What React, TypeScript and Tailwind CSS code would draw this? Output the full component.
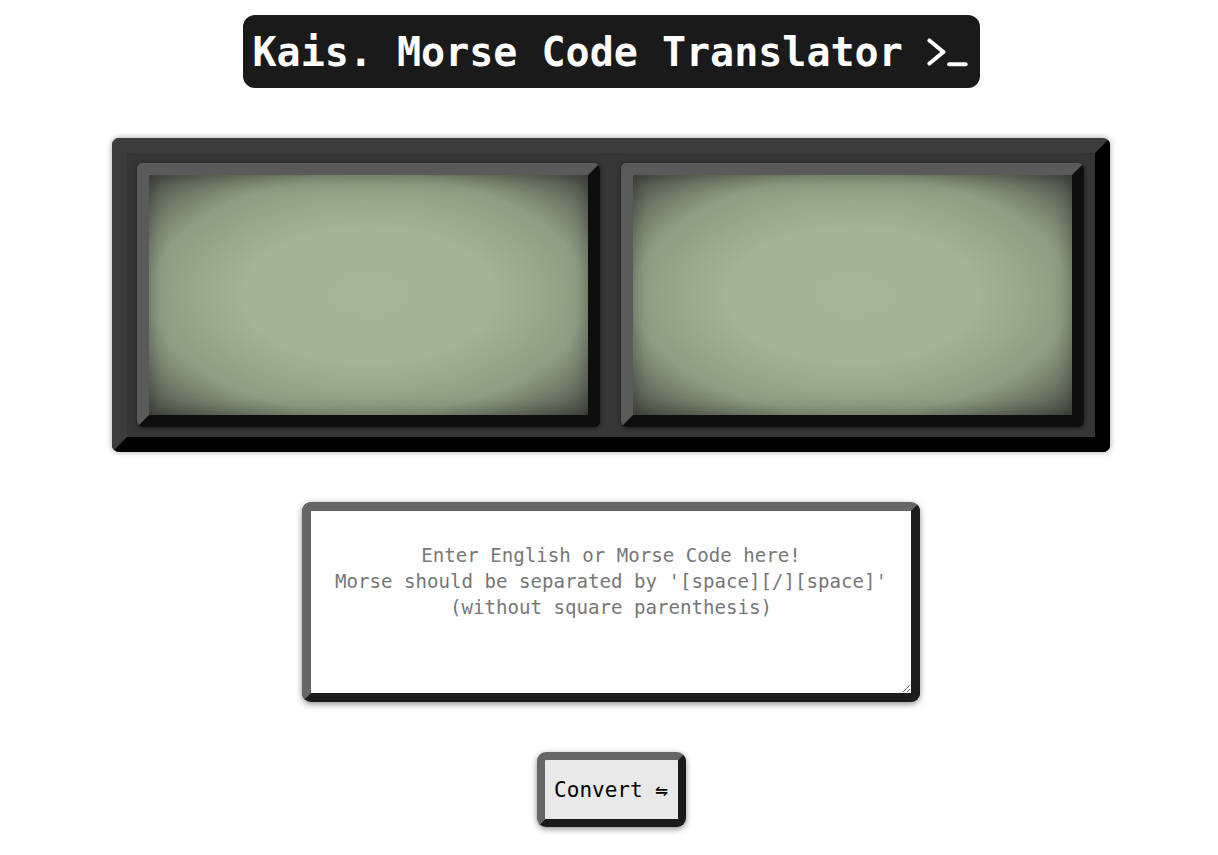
import React from "react";

const mono = { fontFamily: '"DejaVu Sans Mono", "Liberation Mono", monospace' };

function TerminalIcon() {
  return (
    <svg width="52" height="40" viewBox="0 0 52 40" fill="none" stroke="white" strokeWidth="5" strokeLinecap="round" strokeLinejoin="round">
      <polyline points="3,6 20,20 3,34" />
      <line x1="27" y1="35" x2="47" y2="35" />
    </svg>
  );
}

function Screen() {
  return (
    <div className="w-[463px] h-[264px] rounded-[6px] border-[12px] border-t-[#5a5a5a] border-l-[#5a5a5a] border-r-[#0e0e0e] border-b-[#0e0e0e] shadow-[0_1px_4px_rgba(0,0,0,0.5)]">
      <div className="w-full h-full bg-[radial-gradient(ellipse_at_center,#a5b596_0%,#a3b394_40%,#8e9d83_70%,#4a4e46_100%)] shadow-[inset_0_0_20px_rgba(0,0,0,0.35)]" />
    </div>
  );
}

export default function App() {
  return (
    <div className="min-h-screen bg-white flex flex-col items-center pt-[15px] pl-[4px]" style={mono}>
      <div className="h-[73px] w-[737px] rounded-[12px] bg-[#1a1a1a] flex items-center pl-[10px] pr-[10px]">
        <span className="text-white font-bold text-[40px] leading-none whitespace-pre">Kais. Morse Code Translator </span>
        <TerminalIcon />
      </div>

      <div className="mt-[50px] w-[998px] h-[314px] rounded-[7px] bg-[#363636] border-[15px] border-t-[#3c3c3c] border-l-[#3c3c3c] border-r-black border-b-black p-[10px] flex gap-[21px] shadow-[0_0_6px_rgba(0,0,0,0.35)]">
        <Screen />
        <Screen />
      </div>

      <div className="mt-[50px] w-[618px] h-[200px] rounded-[9px] border-[9px] border-t-[#666666] border-l-[#666666] border-r-[#1c1c1c] border-b-[#1c1c1c] shadow-[0_2px_6px_rgba(0,0,0,0.45)] bg-white">
        <textarea
          className="block w-full h-full bg-white text-center text-[19.1px] leading-[26px] pt-[32px] px-[4px] outline-none placeholder:text-[#777777] text-black"
          style={mono}
          placeholder={"Enter English or Morse Code here!\nMorse should be separated by '[space][/][space]'\n(without square parenthesis)"}
        />
      </div>

      <button
        className="mt-[50px] w-[149px] h-[75px] rounded-[9px] border-[8px] border-t-[#666666] border-l-[#666666] border-r-[#1a1a1a] border-b-[#1a1a1a] bg-[#e9e9e9] text-black text-[21px] pt-[3px] shadow-[0_2px_6px_rgba(0,0,0,0.45)] flex items-center justify-center"
        style={mono}
      >
        Convert ⇋
      </button>
    </div>
  );
}
